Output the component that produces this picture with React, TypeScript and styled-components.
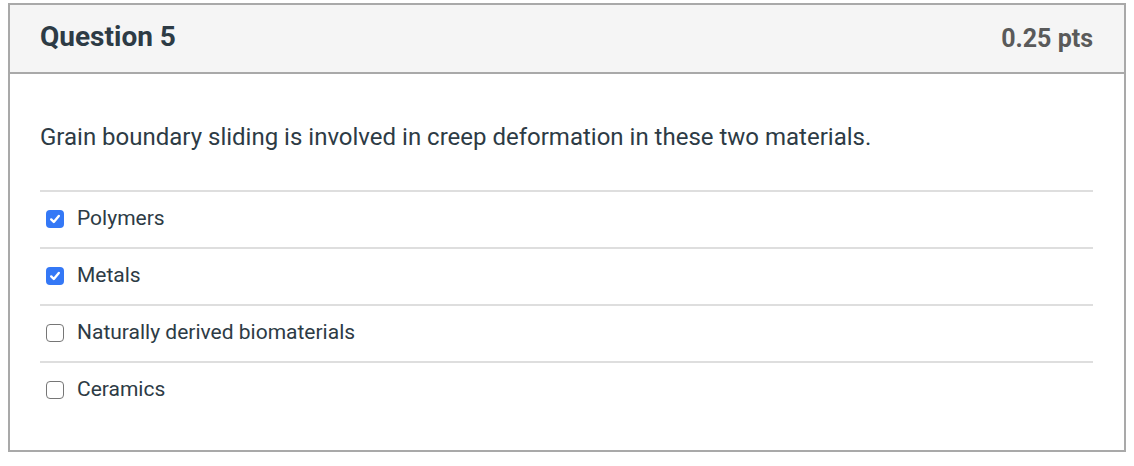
import React from 'react';
import styled, { createGlobalStyle } from 'styled-components';

const GlobalStyle = createGlobalStyle`
  html, body {
    margin: 0;
    padding: 0;
    background: #fff;
  }
  body {
    padding: 3px 8px;
    font-family: Roboto, "Liberation Sans", Arial, sans-serif;
    color: #2d3b45;
  }
`;

const Card = styled.div`
  width: 1118px;
  box-sizing: border-box;
  border: 2px solid #a9a9a9;
`;

const Header = styled.div`
  display: flex;
  justify-content: space-between;
  align-items: center;
  height: 67px;
  padding: 0 31px 0 30px;
  background: #f5f5f5;
  border-bottom: 2px solid #a9a9a9;
`;

const Title = styled.h2`
  margin: 0 0 4px;
  font-size: 28px;
  font-weight: 700;
  color: #2d3b45;
`;

const Points = styled.span`
  font-size: 25px;
  font-weight: 700;
  color: #5a5a5a;
`;

const Body = styled.div`
  padding: 48px 31px 32px 30px;
`;

const Prompt = styled.p`
  margin: 0 0 38px;
  font-size: 24px;
  line-height: 30px;
  color: #2d3b45;
`;

const Answers = styled.ul`
  list-style: none;
  margin: 0;
  padding: 0;
`;

const Answer = styled.li`
  display: flex;
  align-items: center;
  gap: 13px;
  height: 55px;
  box-sizing: content-box;
  padding: 0 6px;
  border-top: 2px solid #dedede;
  font-size: 21px;
  color: #2d3b45;

  & > span:last-child {
    padding-bottom: 4px;
  }
`;

const Box = styled.span<{ checked: boolean }>`
  display: inline-flex;
  align-items: center;
  justify-content: center;
  width: 18px;
  height: 18px;
  box-sizing: border-box;
  border-radius: 4px;
  flex: none;
  margin-bottom: 2px;
  ${({ checked }) =>
    checked
      ? `
    background: #3478f6;
    border: none;
  `
      : `
    background: #fff;
    border: 1.5px solid #767676;
  `}
`;

const Label = styled.span`
  line-height: 24px;
`;

const CheckMark = () => (
  <svg width="12" height="12" viewBox="0 0 12 12">
    <path
      d="M2.2 6.4 L4.8 9 L9.8 3"
      fill="none"
      stroke="#fff"
      strokeWidth="2.4"
      strokeLinecap="round"
      strokeLinejoin="round"
    />
  </svg>
);

const answers = [
  { label: 'Polymers', checked: true },
  { label: 'Metals', checked: true },
  { label: 'Naturally derived biomaterials', checked: false },
  { label: 'Ceramics', checked: false },
];

const App: React.FC = () => {
  return (
    <>
      <GlobalStyle />
      <Card>
        <Header>
          <Title>Question 5</Title>
          <Points>0.25 pts</Points>
        </Header>
        <Body>
          <Prompt>Grain boundary sliding is involved in creep deformation in these two materials.</Prompt>
          <Answers>
            {answers.map((a) => (
              <Answer key={a.label}>
                <Box checked={a.checked}>{a.checked && <CheckMark />}</Box>
                <Label>{a.label}</Label>
              </Answer>
            ))}
          </Answers>
        </Body>
      </Card>
    </>
  );
};

export default App;
